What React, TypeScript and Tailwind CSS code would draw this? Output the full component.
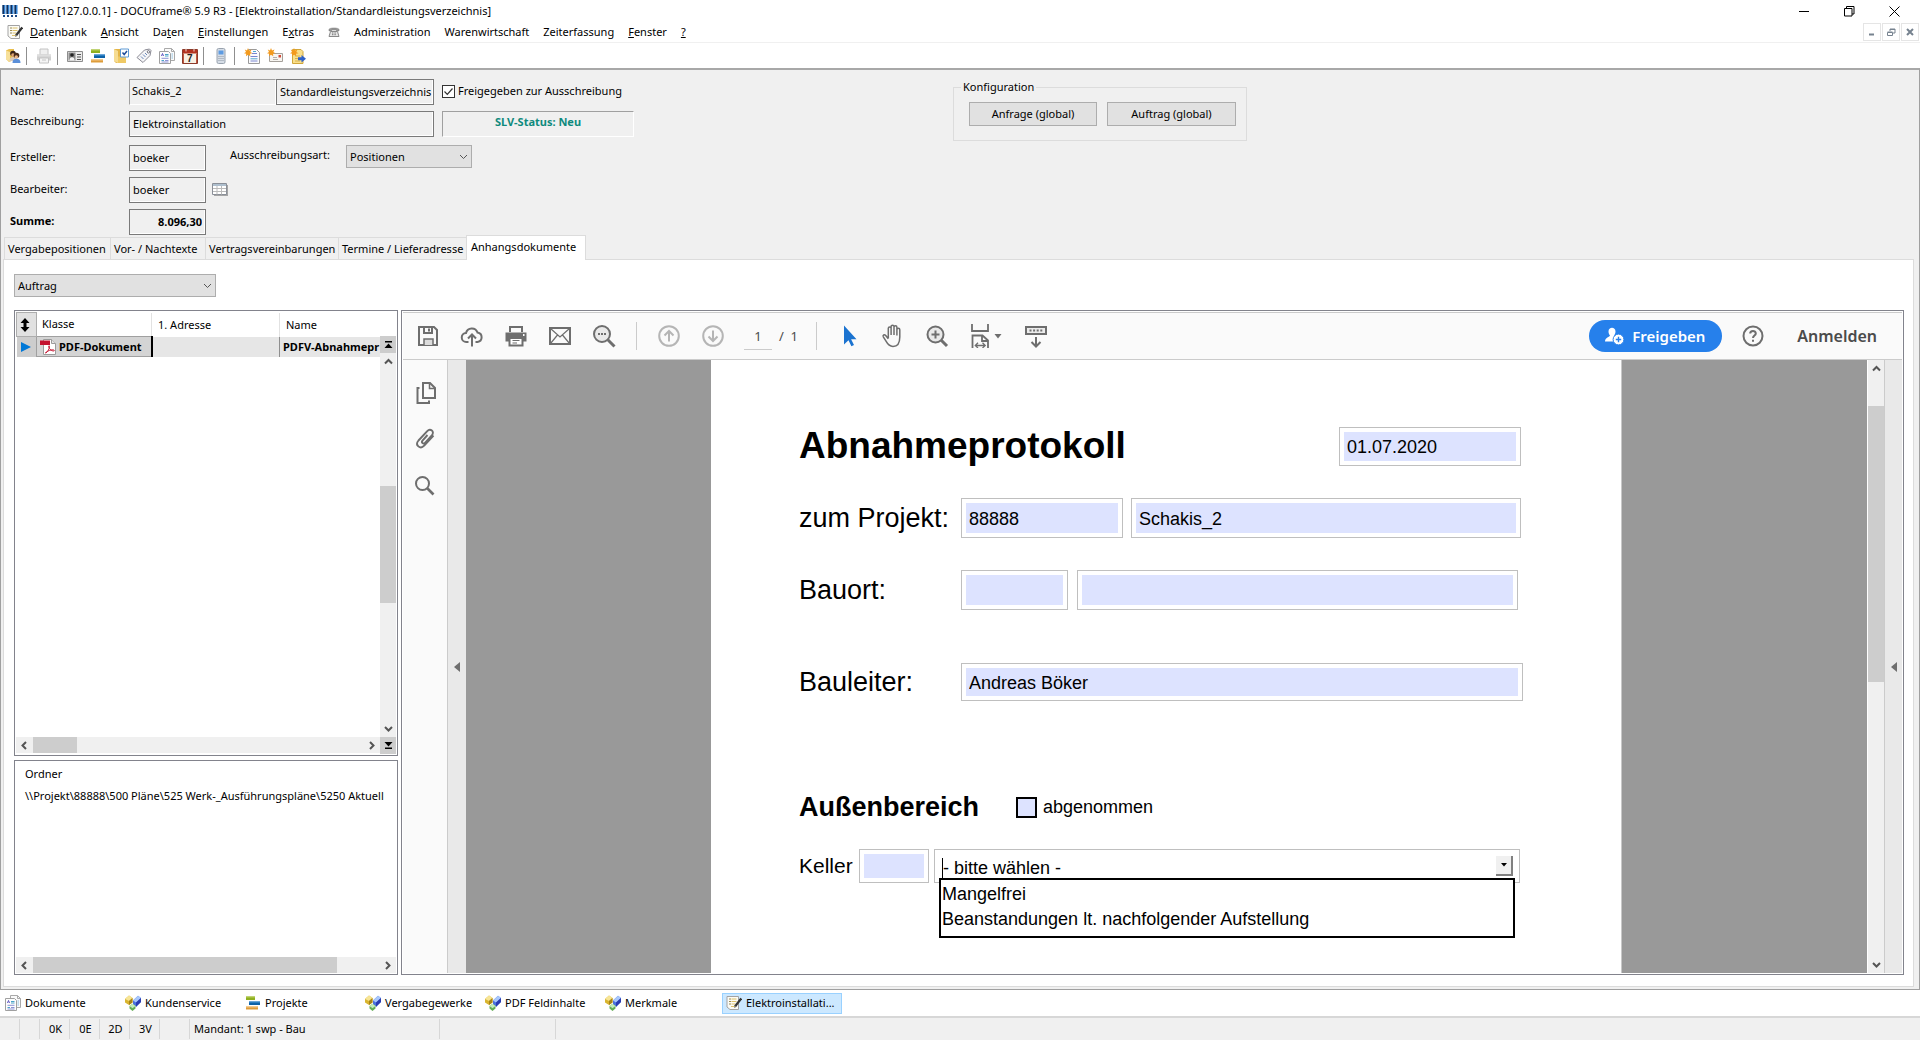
import React from "react";

const Svg = ({ children, s = 16, h }: { children: React.ReactNode; s?: number; h?: number }) => (
  <svg width={s} height={h ?? s} viewBox={`0 0 ${s} ${h ?? s}`} fill="none" className="shrink-0" aria-hidden="true">
    {children}
  </svg>
);

/* ---------- small 16px application icons ---------- */

const AppIcon = () => (
  <Svg>
    <path d="M0.500 2h3v9h-3zM4.500 2h3v9h-3zM8.500 2h3v9h-3zM12.500 2h3v9h-3z" fill="#2f7fd0" />
    <path d="M0.500 2h1.500v9h-1.500zM4.500 2h1.500v9h-1.500zM8.500 2h1.500v9h-1.500zM12.500 2h1.500v9h-1.500z" fill="#12305c" />
    <path d="M1 12h2v2h-2zM5 12h2v2h-2zM9 12h2v2h-2zM13 12h2v2h-2z" fill="#1d4a86" />
  </Svg>
);
const NotePen = () => (
  <Svg>
    <path d="M1 1.500h11.500v13H4L1 12z" fill="#fbfbf6" stroke="#a3a3a3" />
    <path d="M3 4h2M3 6.500h2M3 9h2" stroke="#9a8a55" />
    <path d="M5.500 4h5M5.500 6.500h5M5.500 9h4M5 11.500h4" stroke="#ddc16a" />
    <path d="M15.200 3.500L9 11.500" stroke="#333" strokeWidth="2.200" />
    <path d="M9.200 10.500l-1.400 2.700 2.700-1.500z" fill="#777" />
  </Svg>
);
const PeopleFolder = () => (
  <Svg>
    <path d="M1 2.500L4 1h5v11l-5 2-3-3z" fill="#e9bf4f" />
    <path d="M1 2.500L5 4v10l-4-3z" fill="#f7e09a" />
    <circle cx="8" cy="5.500" r="2.800" fill="#3b2417" />
    <circle cx="8" cy="7" r="1.800" fill="#e3a878" />
    <path d="M4.500 13c0-3 1.500-4 3.500-4s3 1 3 4z" fill="#d8c8ba" />
    <circle cx="11.500" cy="7.500" r="2.800" fill="#4a2c1b" />
    <circle cx="11.300" cy="9" r="1.700" fill="#edb88b" />
    <path d="M7.500 15c0-3 1.500-4.200 4-4.200s4 1.200 4 4.200z" fill="#5b8fd8" />
  </Svg>
);
const PrinterGrey = () => (
  <Svg>
    <path d="M4 1h8v6H4z" fill="#efefef" stroke="#c4c4c4" />
    <path d="M1 6.500h14v6H1z" fill="#cfcfcf" />
    <path d="M1 6.500h14v2H1z" fill="#dedede" />
    <path d="M3.500 10h9v5h-9z" fill="#f5f5f5" stroke="#c4c4c4" />
    <path d="M6 12h4" stroke="#c4c4c4" />
  </Svg>
);
const IdCard = () => (
  <Svg>
    <path d="M.5 3.500h15v10H.5z" fill="#ececec" stroke="#8d8d8d" />
    <path d="M1.500 4.500h7v8h-7z" fill="#8a8a8a" />
    <circle cx="5" cy="7" r="1.800" fill="#222" />
    <path d="M2.500 12.500c0-2.500 1-3.300 2.500-3.300s2.500.8 2.500 3.300z" fill="#f4f4f4" />
    <path d="M10 6.500h4M10 9h4M10 11.500h4" stroke="#555" />
  </Svg>
);
const Gantt = () => (
  <Svg>
    <path d="M1 1.500h9v3.500h-9z" fill="#8fb021" />
    <path d="M1 1.500h9v1h-9z" fill="#b9cf5a" />
    <path d="M4 6.500h11v3.500h-11z" fill="#0d62a8" />
    <path d="M4 6.500h11v1h-11z" fill="#4f9bdc" />
    <path d="M1 11.500h12v3h-12z" fill="#dd9c3a" />
    <path d="M1 11.500h12v1h-12z" fill="#f2c787" />
  </Svg>
);
const FolderCheck = () => (
  <Svg>
    <path d="M1 1h6v14H3l-2-2z" fill="#e3b548" />
    <path d="M1 1l4 2v12l-4-2z" fill="#f6dc92" />
    <path d="M5 8.500h8V15H5z" fill="#efc964" />
    <path d="M7.500 1h8v8h-8z" fill="#fff" stroke="#5e9ad4" />
    <path d="M9.500 4.500l1.700 2L14 3" stroke="#1f4d9b" strokeWidth="1.500" />
  </Svg>
);
const TagIcon = () => (
  <Svg>
    <path d="M1 9.500L8.500 2l5-1 1.500 1.500-1 5L7 14.500z" fill="#f5f5f7" stroke="#8a8a94" strokeLinejoin="round" />
    <circle cx="12.500" cy="3.800" r="1.200" fill="#fff" stroke="#6f6f7a" />
    <path d="M5 8.500l2.500 2.500M7 6.500L9.500 9M9 5l2 2" stroke="#6a87b8" />
  </Svg>
);
const Docs = () => (
  <Svg>
    <path d="M5.500.5h7l3 3v9h-10z" fill="#fafafa" stroke="#a9a9a9" />
    <path d="M12.500.5v3h3" stroke="#a9a9a9" />
    <path d="M.5 3.500h9l2 2v10H.5z" fill="#fdfdfd" stroke="#a0a0a0" />
    <path d="M2.500 8l1-2.500L4.500 8" stroke="#5a4fc0" />
    <path d="M6 6.500h3.500M6 8h3.500M2.500 12.500h2.500" stroke="#4aa3c8" />
    <path d="M2.500 10.300h7M6 12.500h3.500M2.500 14h7" stroke="#8c93d4" />
    <path d="M12.500 6h1.500M12.500 8h1.500M12.500 10h1.500" stroke="#8bbfe0" />
  </Svg>
);
const Calendar7 = () => (
  <Svg>
    <path d="M.5 1.500h15v14H.5z" fill="#f8f1e4" stroke="#8c3a2a" />
    <path d="M1 2h14v3.500H1z" fill="#b3321f" />
    <path d="M4 .5v3M12 .5v3" stroke="#f2d7d0" />
    <path d="M14 5.500h1v9.500h-1zM1 5.500h1v9.500H1z" fill="#c0573f" />
    <text x="5" y="14" fontFamily="Liberation Sans" fontWeight="700" fontSize="10" fill="#222">7</text>
  </Svg>
);
const PhoneIcon = () => (
  <Svg>
    <rect x="4" y=".5" width="8" height="15" rx="1.500" fill="#d6dde6" stroke="#98a2ae" />
    <path d="M5.500 2.500h5v4h-5z" fill="#5d9be2" />
    <path d="M5.500 8.500h5M5.500 10.500h5M5.500 12.500h5" stroke="#8c97a5" strokeDasharray="1 1" />
  </Svg>
);
const star = "M4 0l1 2.500L7.500 1.500 6.300 4l2.200 1.200-2.500.6.300 2.500L4 6.700 2 8.300l.2-2.600L0 5.200 2 4 .8 1.600 3 2.500z";
const NewDoc = () => (
  <Svg>
    <path d="M4.500 1.500h8l3 3v11h-11z" fill="#fbfbfd" stroke="#9a9a9a" />
    <path d="M8 5.500h5M6.500 8.500h7M6.500 13h7" stroke="#7a86cf" />
    <path d="M6.500 10.800h7M9 3.500h3" stroke="#55a9cf" />
    <path d={star} fill="#f39a1d" />
  </Svg>
);
const NewMail = () => (
  <Svg>
    <path d="M2.500 5.500h13v8h-13z" fill="#f7f5f1" stroke="#a5a09a" />
    <path d="M11.500 7h2.500v2.500h-2.500z" fill="#d14a38" />
    <path d="M6 9.500h4M6 11.500h5" stroke="#b5b1ab" />
    <path d={star} fill="#f39a1d" />
  </Svg>
);
const NoteArrow = () => (
  <Svg>
    <path d="M2.500 1.500H11l2 2v12H2.500z" fill="#f9df8b" stroke="#d1a63a" />
    <path d="M5 8h5M5 10.500h3M5 13h5" stroke="#d9b24c" />
    <path d="M8 9.200h3.500V7l4.500 3.700-4.500 3.700v-2.200H8z" fill="#2f62c9" />
    <path d={star} fill="#f39a1d" />
  </Svg>
);
const Cubes = () => (
  <Svg>
    <path d="M0 4l4-3.500L7.500 3v4.500L4 10 0 7.500z" fill="#d9b52f" />
    <path d="M0 4l4-3.500L7.500 3 4 6z" fill="#f7e596" />
    <path d="M4 6v4l3.500-2.500V3z" fill="#a98417" />
    <path d="M8 5.500L13 .8 16 3v4l-5 4.500-3-2z" fill="#4a72dd" />
    <path d="M8 5.500L13 .8 16 3l-5 4.500z" fill="#a9c8fb" />
    <path d="M11 7.500V12l5-5V3z" fill="#2a3bb0" />
    <path d="M4.500 11l3-2.300L10.500 11v2.500L7.500 16l-3-2.500z" fill="#63ac54" />
    <path d="M4.500 11l3-2.300L10.500 11l-3 2.200z" fill="#c3ecb9" />
  </Svg>
);
const Telephone = () => (
  <Svg s={12} h={12}>
    <path d="M1 3.500C1 1.500 11 1.500 11 3.500V5H8.500V4h-5v1H1z" fill="#999" stroke="#777" strokeWidth=".5" />
    <path d="M2.500 5.500h7l1.500 5H1z" fill="#e5e5e5" stroke="#888" />
    <path d="M4 7h4M4 8.700h4" stroke="#777" strokeDasharray="1 .6" />
  </Svg>
);
const GridIcon = () => (
  <Svg s={16} h={13}>
    <path d="M2 2h14v11H2z" fill="#a5a5a5" />
    <path d="M.5.500h14v11H.5z" fill="#fff" stroke="#8a8f98" />
    <path d="M1 1h13v2H1z" fill="#aebfce" />
    <path d="M1 5.500h13M1 8.500h13M5 3v8.500M9.500 3v8.500" stroke="#bbb" />
  </Svg>
);
const PdfIcon = () => (
  <Svg>
    <path d="M3.500.5h8l4 4v11h-12z" fill="#fff" stroke="#9b9b9b" />
    <path d="M11.500.5v4h4" fill="#e4e4e4" stroke="#9b9b9b" />
    <path d="M0 1.500h10v4.500H0z" fill="#c4122f" />
    <path d="M6 14c1.500-1 3.300-4 3.500-6.500.1-1.300-1.200-1-.8.300.6 2.200 3 4.400 5 4.200 1-.1.800-1.200-.5-1.200-2.500 0-5 1-7 2.200-1 .7-.8 1.500-.2 1z" stroke="#c4122f" strokeWidth=".9" />
  </Svg>
);

/* ---------- viewer icons ---------- */

const g = "#6e6e6e";
const Big = ({ children, w = 24 }: { children: React.ReactNode; w?: number }) => (
  <svg width={w} height="24" viewBox={`0 0 ${w} 24`} fill="none" stroke={g} strokeWidth="2" className="shrink-0" aria-hidden="true">
    {children}
  </svg>
);
const Save = () => (
  <Big>
    <path d="M3 3h15l3 3v15H3z" />
    <path d="M8 3v6h8V3M13 4.500v3" />
    <path d="M8 21v-6h9v6" fill="#dcdcdc" strokeWidth="1.500" />
  </Big>
);
const Cloud = () => (
  <Big>
    <path d="M8.500 18H6.500a4.500 4.500 0 0 1-.5-9 6 6 0 0 1 11.500-.5A4.800 4.800 0 0 1 17.500 18H15.500" />
    <path d="M12 22.500V11M8 14.500L12 10.500l4 4" />
  </Big>
);
const Print = () => (
  <Big>
    <path d="M6 8V3h12v5" />
    <path d="M1.500 8.500h21v9h-21z" fill={g} stroke="none" />
    <path d="M5.500 14h13v7.500h-13z" fill="#fff" />
    <path d="M8.500 16.500h7M8.500 19h4.500" strokeWidth="1.200" />
    <path d="M19 11h1.500" stroke="#fff" />
  </Big>
);
const MailIcon = () => (
  <Big>
    <path d="M2 4h20v16H2z" />
    <path d="M2.500 4.500L12 13l9.500-8.500M2.500 19.500l7-8.500M21.500 19.500l-7-8.500" strokeWidth="1.200" />
  </Big>
);
const SearchDots = () => (
  <Big>
    <circle cx="10" cy="10" r="8" fill="#e9e9e9" />
    <path d="M15.800 15.800L22.500 22.500" strokeWidth="3" />
    <path d="M6 10h2M9 10h2M12 10h2" />
  </Big>
);
const Circ = ({ down }: { down?: boolean }) => (
  <svg width="24" height="24" viewBox="0 0 24 24" fill="none" stroke="#b5b5b5" strokeWidth="2" aria-hidden="true">
    <circle cx="12" cy="12" r="9.800" />
    <path d={down ? "M12 6.500V17M7.500 12.500L12 17l4.500-4.500" : "M12 17.500V7M7.500 11.500L12 7l4.500 4.500"} />
  </svg>
);
const Pointer = () => (
  <Big>
    <path d="M7 1.500v19l4.500-4.200 2.900 6 2.600-1.300-2.900-5.700h5.400z" fill="#1b73d0" stroke="none" />
  </Big>
);
const Hand = () => (
  <Big>
    <path d="M7.300 14.500V4.300a1.400 1.400 0 0 1 2.800 0V11M10.100 10.500V2.600a1.400 1.400 0 0 1 2.900 0V11M13 10.500V3.200a1.400 1.400 0 0 1 2.900 0V11.500M15.900 10.500V5.800a1.400 1.400 0 0 1 2.900 0V13c0 5-1.500 9.500-6.800 9.500-4 0-5.500-2.500-7.300-5.800L2.300 12.800c-.8-1.600 1-2.800 2.400-1.300l2.600 3.300" strokeWidth="1.500" strokeLinejoin="round" />
  </Big>
);
const ZoomIn = () => (
  <Big>
    <circle cx="10.500" cy="10.500" r="8" fill="#e9e9e9" />
    <path d="M16 16l6 6" strokeWidth="3" />
    <path d="M10.500 6.500v8M6.500 10.500h8" />
  </Big>
);
const Fit = () => (
  <Big w={32}>
    <path d="M2 0v7h16V0" strokeWidth="1.800" />
    <path d="M2.500 24V11.500h10l5.500 5V24M12 11.500v5.500h6" strokeWidth="1.800" />
    <path d="M5.500 21.500h9.500M8 18.800l-2.700 2.700L8 24M12.500 18.800l2.700 2.700-2.700 2.500" strokeWidth="1.300" />
    <path d="M24.500 10h7L28 14.500z" fill={g} stroke="none" />
  </Big>
);
const KeyDown = () => (
  <Big>
    <path d="M2 3h20v7H2z" fill="#ececec" />
    <path d="M5.500 6.500h14" strokeDasharray="2 1.600" />
    <path d="M12 13v9M7.500 18l4.500 4.500 4.500-4.500" />
  </Big>
);
const Help = () => (
  <Big>
    <circle cx="12" cy="12" r="9.500" />
    <path d="M9.200 9.500c0-3.400 5.600-3.400 5.600 0 0 2-2.800 2.200-2.800 4.500" />
    <path d="M12 15.700v2" />
  </Big>
);
const Pages = () => (
  <Big>
    <path d="M10 2h7l5 5v10H10z" />
    <path d="M16.500 2v5.500H22" strokeWidth="1.500" />
    <path d="M6.500 7H4.500v15H16v-2.500" />
  </Big>
);
const Clip = () => (
  <Big>
    <path d="M14.500 8l-5 5.600c-1.600 2 .8 4 2.500 2.200l6.800-7.400c3.300-3.900-1.500-7.600-4.800-4L5.500 13.500c-4 4.700 1.800 9.300 5.700 5.200l9.300-10.200" strokeWidth="1.900" />
  </Big>
);
const Find = () => (
  <Big>
    <circle cx="9.500" cy="9.500" r="6.500" />
    <path d="M14 14l6.500 6.500" strokeWidth="2.600" />
  </Big>
);

/* ---------- shared parts ---------- */

const Chev = ({ d, c = "#555", w = 2 }: { d: "up" | "down" | "left" | "right"; c?: string; w?: number }) => {
  const paths = { up: "M1 6.500L4.500 3 8 6.500", down: "M1 3l3.500 3.500L8 3", left: "M6 1L2.500 4.500 6 8", right: "M3 1l3.500 3.500L3 8" };
  return (
    <svg width="9" height="9" viewBox="0 0 9 9" fill="none" stroke={c} strokeWidth={w} aria-hidden="true">
      <path d={paths[d]} />
    </svg>
  );
};

const HScroll = ({ thumb }: { thumb: string }) => (
  <div className="flex h-4 bg-[#f0f0f0]">
    <button aria-label="Nach links" className="grid w-[17px] place-items-center"><Chev d="left" /></button>
    <div className="flex-1"><div className={`h-full bg-[#cdcdcd] ${thumb}`} /></div>
    <button aria-label="Nach rechts" className="grid w-[17px] place-items-center"><Chev d="right" /></button>
  </div>
);

const VScroll = ({ before, thumb }: { before: string; thumb: string }) => (
  <div className="flex w-4 flex-1 flex-col bg-[#f0f0f0]">
    <button aria-label="Nach oben" className="grid h-[17px] place-items-center"><Chev d="up" /></button>
    <div className="flex flex-1 flex-col">
      <div className={before} />
      <div className={`bg-[#cdcdcd] ${thumb}`} />
    </div>
    <button aria-label="Nach unten" className="grid h-[17px] place-items-center"><Chev d="down" /></button>
  </div>
);

const field = "h-[26px] border border-[#7a7a7a] bg-[#f0f0f0] px-[3px] pb-px outline-none shadow-[inset_-1px_-1px_0_#fff]";

const Combo = ({ id, value, label, className }: { id: string; value: string; label?: string; className: string }) => (
  <div className={`relative ${className}`}>
    <select id={id} aria-label={label} className="h-[23px] w-full appearance-none border border-[#adadad] bg-[#e1e1e1] px-[3px]">
      <option>{value}</option>
    </select>
    <span className="pointer-events-none absolute top-[7px] right-1"><Chev d="down" w={1} /></span>
  </div>
);

const Sep = () => <span className="mr-[5px] ml-[2px] h-[18px] w-px bg-[#8f8f8f]" />;

const ToolBtn = ({ label, children }: { label: string; children: React.ReactNode }) => (
  <button aria-label={label} className="grid h-6 w-[23px] place-items-center">{children}</button>
);

const BigBtn = ({ label, children }: { label: string; children: React.ReactNode }) => (
  <button aria-label={label} className="grid h-8 w-11 place-items-center">{children}</button>
);

const menus: [string, string, string][] = [
  ["", "D", "atenbank"], ["", "A", "nsicht"], ["Da", "t", "en"], ["", "E", "instellungen"], ["E", "x", "tras"],
  ["*", "", ""], ["Administration", "", ""], ["Warenwirtschaft", "", ""], ["Zeiterfassung", "", ""], ["", "F", "enster"], ["", "?", ""],
];

const tabs: [string, string][] = [
  ["Vergabepositionen", "w-[106px]"], ["Vor- / Nachtexte", "w-[95px]"], ["Vertragsvereinbarungen", "w-[133px]"], ["Termine / Lieferadresse", "w-[128px]"],
];

const box = "flex border border-[#bfbfbf] bg-white p-1";
const PageField = ({ id, label, value = "", className }: { id: string; label?: string; value?: string; className: string }) => (
  <div className={`${box} ${className}`}>
    <input id={id} aria-label={label} defaultValue={value} className="w-full min-w-0 bg-[#dde3ff] px-[3px] pt-[2px] text-[18px] text-black outline-none" />
  </div>
);

const FormSection = () => (
  <section className="flex pt-[9px] pl-[7px]">
    <div className="flex w-[943px] flex-col">
      <div className="flex h-8 items-start">
        <label htmlFor="name" className="w-[119px] leading-6">Name:</label>
        <input id="name" defaultValue="Schakis_2" className="h-[26px] w-[147px] border border-t-[#a0a0a0] border-r-white border-b-white border-l-[#a0a0a0] bg-[#f0f0f0] px-[2px] pb-1 outline-none" />
        <input aria-label="Typ" defaultValue="Standardleistungsverzeichnis" className={`${field} w-[158px] pr-0`} />
        <label className="ml-2 flex h-6 items-center gap-[3px]">
          <input type="checkbox" defaultChecked className="peer sr-only" />
          <span className="grid h-[13px] w-[13px] place-items-center border border-[#333] bg-white">
            <svg width="11" height="11" viewBox="0 0 11 11" fill="none" stroke="#333" strokeWidth="1.200" aria-hidden="true"><path d="M1.500 5.500L4.300 8.300 9.500 2.500" /></svg>
          </span>
          Freigegeben zur Ausschreibung
        </label>
      </div>
      <div className="flex h-[34px] items-start">
        <label htmlFor="desc" className="w-[119px] leading-5">Beschreibung:</label>
        <input id="desc" defaultValue="Elektroinstallation" className={`${field} w-[305px]`} />
        <output className="ml-2 h-[26px] w-48 border border-t-[#a0a0a0] border-r-white border-b-white border-l-[#a0a0a0] text-center leading-5 font-bold text-[#0e8a7d]">SLV-Status: Neu</output>
      </div>
      <div className="flex h-8 items-start">
        <label htmlFor="creator" className="w-[119px] leading-6">Ersteller:</label>
        <input id="creator" defaultValue="boeker" className={`${field} w-[77px]`} />
        <label htmlFor="kind" className="ml-6 w-[116px] leading-5">Ausschreibungsart:</label>
        <Combo id="kind" value="Positionen" className="w-[126px]" />
      </div>
      <div className="flex h-8 items-start">
        <label htmlFor="editor" className="w-[119px] leading-6">Bearbeiter:</label>
        <input id="editor" defaultValue="boeker" className={`${field} w-[77px]`} />
        <button aria-label="Auswählen" className="mt-[6px] ml-[6px]"><GridIcon /></button>
      </div>
      <div className="flex h-[26px] items-start font-bold">
        <label htmlFor="sum" className="w-[119px] leading-6">Summe:</label>
        <input id="sum" defaultValue="8.096,30" className={`${field} w-[77px] text-right`} />
      </div>
    </div>
    <fieldset className="h-[62px] min-w-0 self-start border border-[#dcdcdc] pr-[10px] pl-[15px]">
      <legend className="-ml-2 px-[2px] leading-4">Konfiguration</legend>
      <div className="mt-[7px] flex gap-[10px]">
        <button className="h-6 w-32 border border-[#adadad] bg-[#e1e1e1]">Anfrage (global)</button>
        <button className="h-6 w-[129px] border border-[#adadad] bg-[#e1e1e1]">Auftrag (global)</button>
      </div>
    </fieldset>
  </section>
);

const LeftColumn = () => (
  <div className="flex w-96 shrink-0 flex-col gap-1">
    <div className="flex h-[446px] flex-col border border-[#82838c] p-px">
      <div className="flex min-h-0 flex-1">
        <div className="min-w-0 flex-1">
          <table className="w-full table-fixed border-collapse text-left">
            <colgroup><col className="w-5" /><col className="w-[115px]" /><col className="w-32" /><col /></colgroup>
            <thead>
              <tr className="h-6">
                <th className="border border-[#adadad] bg-[#e1e1e1]">
                  <svg width="16" height="16" viewBox="0 0 16 16" aria-label="Sortieren"><path d="M8 1l4.500 5H9.500v4h3L8 15l-4.500-5h3V6h-3z" fill="#000" /></svg>
                </th>
                <th className="pl-[5px] font-normal">Klasse</th>
                <th className="border-l border-[#e2e2e2] pl-[6px] font-normal">1. Adresse</th>
                <th className="border-l border-[#e2e2e2] pl-[6px] font-normal">Name</th>
              </tr>
            </thead>
            <tbody>
              <tr className="h-5 bg-[#e6e6e6] font-bold">
                <td className="border-r border-[#a0a0a0] bg-[#cdcdcd]">
                  <svg width="18" height="14" viewBox="0 0 18 14" aria-hidden="true"><path d="M4 2l10 5-10 5z" fill="#0078d7" /></svg>
                </td>
                <td className="border border-r-2 border-[#a0a0a0] border-r-black bg-[#d4d4d4] pl-[3px]">
                  <span className="flex items-center gap-[3px] whitespace-nowrap"><PdfIcon />PDF-Dokument</span>
                </td>
                <td />
                <td className="overflow-hidden border-l border-[#8f8f8f] pl-[3px] whitespace-nowrap">PDFV-Abnahmepr</td>
              </tr>
            </tbody>
          </table>
        </div>
        <div className="flex w-4 flex-col pt-6">
          <button aria-label="Zum Anfang" className="grid h-[17px] place-items-center bg-[#cdcdcd]">
            <svg width="9" height="9" viewBox="0 0 9 9" aria-hidden="true"><path d="M1 1h7v1.500H1zM4.500 3.500L8.500 8h-8z" /></svg>
          </button>
          <VScroll before="h-[116px]" thumb="h-[117px]" />
        </div>
      </div>
      <div className="flex">
        <div className="flex-1"><HScroll thumb="w-11" /></div>
        <button aria-label="Zum Ende" className="grid h-[17px] w-4 place-items-center bg-[#cdcdcd]">
          <svg width="9" height="9" viewBox="0 0 9 9" aria-hidden="true"><path d="M1 6.500h7V8H1zM4.500 5.500L8.500 1h-8z" /></svg>
        </button>
      </div>
    </div>
    <div className="flex flex-1 flex-col border border-[#82838c] p-px">
      <div className="flex-1 pl-[9px]">
        <table className="w-full text-left">
          <thead><tr className="h-6"><th className="font-normal">Ordner</th></tr></thead>
          <tbody><tr className="h-5"><td className="whitespace-nowrap">{"\\\\Projekt\\88888\\500 Pläne\\525 Werk-_Ausführungspläne\\5250 Aktuell"}</td></tr></tbody>
        </table>
      </div>
      <HScroll thumb="w-[304px]" />
    </div>
  </div>
);

const ViewerToolbar = () => (
  <div className="flex h-12 items-center border-t border-b border-[#cbcbcb] bg-[#fafafa] pl-[3px]">
    <BigBtn label="Speichern"><Save /></BigBtn>
    <BigBtn label="Hochladen"><Cloud /></BigBtn>
    <BigBtn label="Drucken"><Print /></BigBtn>
    <BigBtn label="E-Mail"><MailIcon /></BigBtn>
    <BigBtn label="Suchen"><SearchDots /></BigBtn>
    <span className="mx-[10px] h-7 w-px bg-[#cbcbcb]" />
    <BigBtn label="Vorherige Seite"><Circ /></BigBtn>
    <BigBtn label="Nächste Seite"><Circ down /></BigBtn>
    <input aria-label="Seite" defaultValue="1" className="ml-[9px] h-7 w-7 border-b border-[#cbcbcb] text-center text-[13px] text-[#4b4b4b] outline-none" />
    <span className="ml-[7px] w-[33px] text-[13px] text-[#4b4b4b]">/&nbsp; 1</span>
    <span className="mr-[10px] ml-1 h-7 w-px bg-[#cbcbcb]" />
    <BigBtn label="Auswahl"><Pointer /></BigBtn>
    <BigBtn label="Hand"><Hand /></BigBtn>
    <BigBtn label="Vergrößern"><ZoomIn /></BigBtn>
    <button aria-label="Seitenbreite" className="ml-[10px] grid h-8 w-[33px] place-items-center"><Fit /></button>
    <button aria-label="Werkzeugleiste" className="ml-3 grid h-8 w-11 place-items-center"><KeyDown /></button>
    <div className="ml-auto flex items-center pr-[25px] text-[15px] font-semibold">
      <button className="flex h-8 w-[133px] items-center rounded-full bg-[#2680eb] pl-4 text-white">
        <svg width="19" height="18" viewBox="0 0 19 18" className="mr-2" aria-hidden="true">
          <path d="M3.500 4.500C3.500-.5 10.500-.5 10.500 4.500c0 2-1 3.500-1.500 4 .2 1.200 2 1.500 3.500 2.500L8.500 14.500H0C0 10.500 4.800 10 5 8.500 4.500 8 3.500 6.500 3.500 4.500z" fill="#fff" />
          <circle cx="13.500" cy="12.500" r="5.400" fill="#fff" stroke="#2680eb" />
          <path d="M13.500 9.800v5.400M10.800 12.500h5.400" stroke="#2680eb" strokeWidth="1.400" />
        </svg>
        Freigeben
      </button>
      <button aria-label="Hilfe" className="ml-[19px] grid h-8 w-6 place-items-center"><Help /></button>
      <button className="ml-8 text-base text-[#4b4b4b]">Anmelden</button>
    </div>
  </div>
);

const DocumentPage = () => (
  <article className="min-w-0 flex-[910] bg-white font-['Liberation_Sans',Arial,sans-serif] text-[27px] leading-8 text-black">
    <div className="ml-22 flex w-[724px] flex-col">
      <div className="mt-[66px] flex h-10 items-center justify-between">
        <h1 className="text-[37px] leading-10 font-bold">Abnahmeprotokoll</h1>
        <PageField id="date" label="Datum" value="01.07.2020" className="mr-[2px] h-[39px] w-[182px]" />
      </div>
      <div className="mt-8 flex h-10 items-center">
        <label htmlFor="project" className="w-[162px]">zum Projekt:</label>
        <PageField id="project" value="88888" className="h-10 w-[162px]" />
        <PageField id="projectName" label="Projektname" value="Schakis_2" className="ml-2 h-10 w-[390px]" />
      </div>
      <div className="mt-8 flex h-10 items-center">
        <label htmlFor="place" className="w-[162px]">Bauort:</label>
        <PageField id="place" className="h-10 w-[107px]" />
        <PageField id="placeName" label="Bauort Name" className="ml-[9px] h-10 w-[441px]" />
      </div>
      <div className="mt-[53px] flex h-[38px] items-center">
        <label htmlFor="leader" className="w-[162px]">Bauleiter:</label>
        <PageField id="leader" value="Andreas Böker" className="h-[38px] w-[562px]" />
      </div>
      <div className="mt-[90px] flex h-8 items-center">
        <h2 className="w-[217px] font-bold">Außenbereich</h2>
        <input id="done" type="checkbox" className="h-[21px] w-[21px] appearance-none border-2 border-black bg-[#dde3ff]" />
        <label htmlFor="done" className="ml-[6px] text-[18px]">abgenommen</label>
      </div>
      <div className="mt-[26px] flex h-[34px] items-center">
        <label htmlFor="cellar" className="w-[60px] text-[21px]">Keller</label>
        <PageField id="cellar" className="h-[34px] w-[70px]" />
        <div className={`${box} relative ml-[5px] h-[34px] w-[586px]`}>
          <select aria-label="Zustand" className="mt-1 ml-[3px] h-5 w-full appearance-none border-l border-black bg-white text-[18px] leading-5">
            <option>- bitte wählen -</option>
          </select>
          <span className="pointer-events-none absolute top-[6px] right-[6px] grid h-5 w-[17px] place-items-center border-r-2 border-b-2 border-[#808080] bg-[#f0f0f0]">
            <svg width="6" height="4" viewBox="0 0 6 4" aria-hidden="true"><path d="M0 0h6L3 3.500z" /></svg>
          </span>
          <ul role="listbox" aria-label="Zustand" className="absolute top-7 right-1 left-1 border-2 border-black bg-white py-[2px] pb-1 pl-px text-[18px] leading-[25px]">
            <li role="option" aria-selected="false">Mangelfrei</li>
            <li role="option" aria-selected="false">Beanstandungen lt. nachfolgender Aufstellung</li>
          </ul>
        </div>
      </div>
    </div>
  </article>
);

const Tri = () => (
  <svg width="6" height="10" viewBox="0 0 6 10" aria-hidden="true"><path d="M6 0v10L0 5z" fill="#6e6e6e" /></svg>
);

const Viewer = () => (
  <div className="flex min-w-0 flex-1 flex-col border border-[#82838c] p-px">
    <ViewerToolbar />
    <div className="flex flex-1">
      <nav className="flex w-[45px] shrink-0 flex-col items-center border-r border-[#cbcbcb] bg-[#fafafa] pt-[21px]">
        <button aria-label="Seitenminiaturen"><Pages /></button>
        <button aria-label="Anlagen" className="mt-[22px]"><Clip /></button>
        <button aria-label="Suchen" className="mt-[23px]"><Find /></button>
      </nav>
      <button aria-label="Navigationsfenster" className="grid w-[18px] shrink-0 place-items-center bg-[#e9e9e9]"><Tri /></button>
      <div className="flex min-w-0 flex-1 bg-[#999999]">
        <div className="flex-[245]" />
        <DocumentPage />
        <div className="flex-[245] border-l border-[#c8c8c8]" />
      </div>
      <div className="flex w-[18px] shrink-0 border-r border-l border-r-[#cbcbcb] border-l-white"><VScroll before="h-[29px]" thumb="h-[276px]" /></div>
      <button aria-label="Werkzeuge" className="grid w-[17px] shrink-0 place-items-center bg-[#e9e9e9]"><Tri /></button>
    </div>
  </div>
);

const tasks: [string, () => React.ReactElement, string][] = [
  ["Dokumente", Docs, "w-[120px]"], ["Kundenservice", Cubes, "w-[120px]"], ["Projekte", Gantt, "w-[120px]"],
  ["Vergabegewerke", Cubes, "w-[120px]"], ["PDF Feldinhalte", Cubes, "w-[120px]"], ["Merkmale", Cubes, "w-[117px]"],
];

export default function App() {
  return (
    <div className="flex min-h-screen flex-col bg-white font-['Noto_Sans','Open_Sans',sans-serif] text-[11px] leading-4 text-black">
      <header>
        <div className="flex h-[22px] items-center pl-[2px]">
          <AppIcon />
          <span className="ml-[5px] flex-1">Demo [127.0.0.1] - DOCUframe® 5.9 R3 - [Elektroinstallation/Standardleistungsverzeichnis]</span>
          <button aria-label="Minimieren" className="grid h-5 w-[45px] place-items-center"><svg width="11" height="11" viewBox="0 0 11 11" stroke="#000" aria-hidden="true"><path d="M0 5.500h10" /></svg></button>
          <button aria-label="Wiederherstellen" className="grid h-5 w-[45px] place-items-center"><svg width="11" height="11" viewBox="0 0 11 11" fill="none" stroke="#000" aria-hidden="true"><path d="M.5 2.500h7.500v7.500H.5zM2.500 2.500v-2h7.500V8H8" /></svg></button>
          <button aria-label="Schließen" className="mr-[3px] grid h-5 w-[45px] place-items-center"><svg width="11" height="11" viewBox="0 0 11 11" stroke="#000" aria-hidden="true"><path d="M.5.500l10 10M10.500.500l-10 10" /></svg></button>
        </div>
        <div className="flex h-[21px] items-center border-b border-[#f0f0f0] pl-[7px]">
          <NotePen />
          <nav className="ml-[7px] flex flex-1 items-center gap-[14px]">
            {menus.map(([a, u, b], i) =>
              a === "*" ? (
                <button key={i} aria-label="Telefon"><Telephone /></button>
              ) : (
                <button key={i}>{a}<u className="underline-offset-1">{u}</u>{b}</button>
              )
            )}
          </nav>
          <div className="flex gap-px pr-px">
            <button aria-label="Fenster minimieren" className="grid h-[18px] w-[18px] place-items-center border border-[#e5e5e5]"><svg width="8" height="8" aria-hidden="true"><path d="M1 5.500h5v2H1z" fill="#76828f" /></svg></button>
            <button aria-label="Fenster wiederherstellen" className="grid h-[18px] w-[18px] place-items-center border border-[#e5e5e5]"><svg width="9" height="9" fill="none" stroke="#76828f" aria-hidden="true"><path d="M.5 4.500h5v3h-5zM.5 4h5M3 3V1h5v4H6M3 1.500h5" /></svg></button>
            <button aria-label="Fenster schließen" className="grid h-[18px] w-[18px] place-items-center border border-[#e5e5e5]"><svg width="8" height="8" stroke="#76828f" strokeWidth="2" aria-hidden="true"><path d="M1 1l6 6M7 1L1 7" /></svg></button>
          </div>
        </div>
        <div className="flex h-[25px] items-center pl-px">
          <ToolBtn label="Benutzer"><PeopleFolder /></ToolBtn>
          <Sep />
          <ToolBtn label="Drucken"><PrinterGrey /></ToolBtn>
          <Sep />
          <ToolBtn label="Adressen"><IdCard /></ToolBtn>
          <ToolBtn label="Projekte"><Gantt /></ToolBtn>
          <ToolBtn label="Aufgaben"><FolderCheck /></ToolBtn>
          <ToolBtn label="Artikel"><TagIcon /></ToolBtn>
          <ToolBtn label="Dokumente"><Docs /></ToolBtn>
          <ToolBtn label="Kalender"><Calendar7 /></ToolBtn>
          <Sep />
          <ToolBtn label="Telefon"><PhoneIcon /></ToolBtn>
          <Sep />
          <ToolBtn label="Neues Dokument"><NewDoc /></ToolBtn>
          <ToolBtn label="Neue E-Mail"><NewMail /></ToolBtn>
          <ToolBtn label="Neue Notiz"><NoteArrow /></ToolBtn>
        </div>
      </header>

      <main className="flex flex-1 flex-col border border-t-2 border-[#a0a0a0] border-t-[#a8a8a8] bg-[#f0f0f0] px-[2px] pb-[2px]">
        <FormSection />
        <div role="tablist" className="flex h-6 items-end pl-px">
          {tabs.map(([t, w]) => (
            <button key={t} role="tab" aria-selected="false" className={`h-[22px] border-t border-l border-[#dcdcdc] pl-[3px] text-left whitespace-nowrap ${w}`}>{t}</button>
          ))}
          <button role="tab" aria-selected="true" className="z-10 -mb-px h-[25px] w-[120px] border border-b-0 border-[#dcdcdc] bg-white pb-[2px] pl-1 text-left whitespace-nowrap">Anhangsdokumente</button>
        </div>
        <div role="tabpanel" className="mr-[3px] flex flex-1 flex-col border border-[#dcdcdc] bg-white pt-[14px] pr-[9px] pb-[11px] pl-[10px]">
          <Combo id="scope" label="Bereich" value="Auftrag" className="w-[202px]" />
          <div className="mt-[13px] flex flex-1 gap-[3px]">
            <LeftColumn />
            <Viewer />
          </div>
        </div>
      </main>

      <footer>
        <nav className="flex h-[26px] items-center pl-[5px]">
          {tasks.map(([t, I, w]) => (
            <button key={t} className={`flex items-center gap-1 ${w}`}><I />{t}</button>
          ))}
          <button className="flex h-[21px] w-[120px] items-center gap-1 border border-[#99d1ff] bg-[#cce8ff] pl-[3px]"><NotePen />Elektroinstallati...</button>
        </nav>
        <div className="flex h-6 border-t-2 border-[#d7d7d7] bg-[#f0f0f0] py-px leading-5">
          <span className="w-5 border-r border-[#d7d7d7]" />
          <span className="w-5 border-r border-[#d7d7d7]" />
          <span className="w-[30px] border-r border-[#d7d7d7] pl-[2px] text-center">0K</span>
          <span className="w-[30px] border-r border-[#d7d7d7] pl-[2px] text-center">0E</span>
          <span className="w-[30px] border-r border-[#d7d7d7] pl-[2px] text-center">2D</span>
          <span className="w-[30px] border-r border-[#d7d7d7] pl-[2px] text-center">3V</span>
          <span className="w-[30px] border-r border-[#d7d7d7]" />
          <span className="w-[250px] border-r border-[#d7d7d7] pl-1">Mandant: 1 swp - Bau</span>
          <span className="w-[116px] border-r border-[#d7d7d7]" />
        </div>
      </footer>
    </div>
  );
}
